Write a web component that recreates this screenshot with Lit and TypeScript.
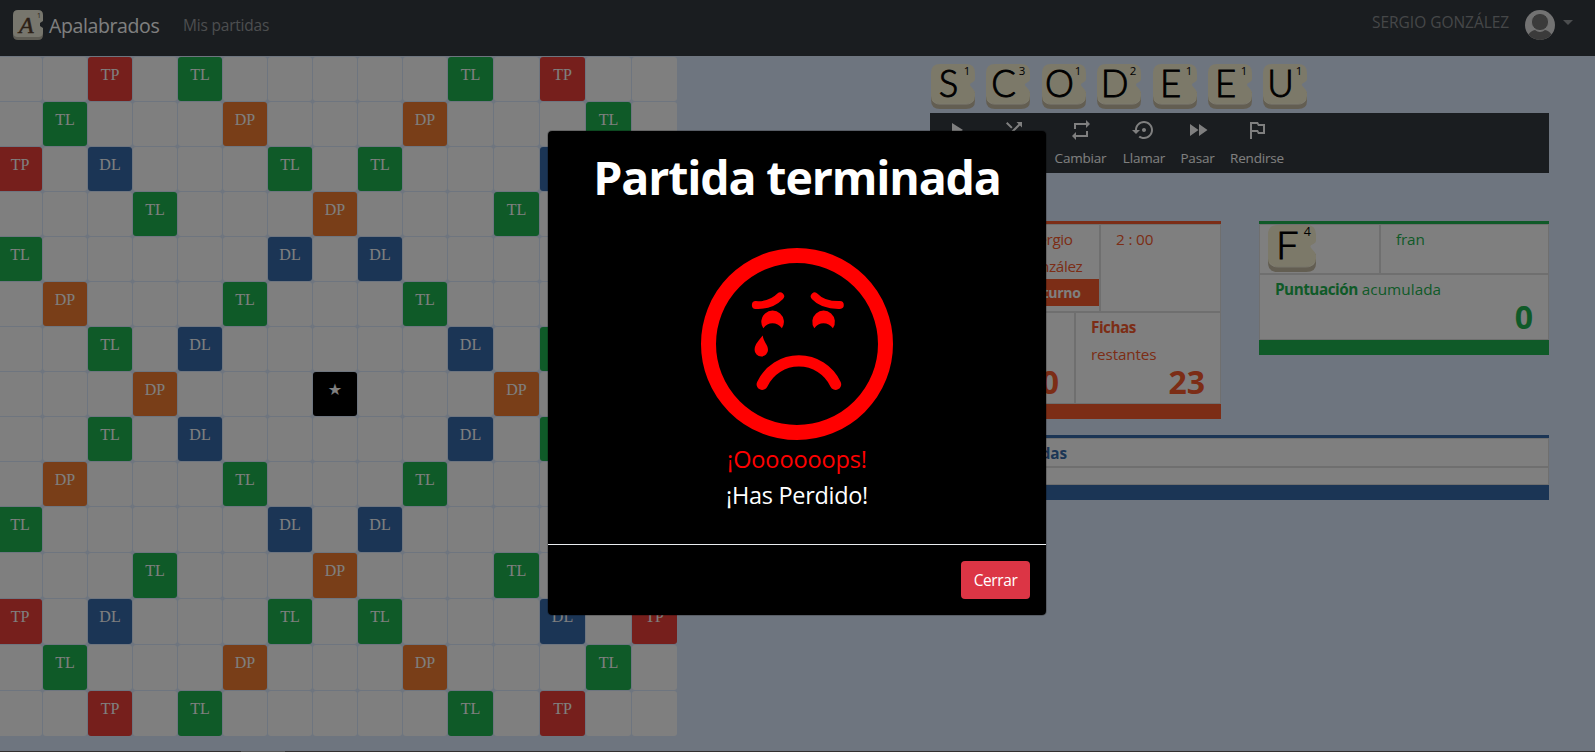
import { LitElement, html, svg, css } from "lit";
import { customElement, property } from "lit/decorators.js";

const HALF: Record<number, string>[] = [
  { 2: "TP", 4: "TL", 10: "TL", 12: "TP" },
  { 1: "TL", 5: "DP", 9: "DP", 13: "TL" },
  { 0: "TP", 2: "DL", 6: "TL", 8: "TL", 12: "DL", 14: "TP" },
  { 3: "TL", 7: "DP", 11: "TL" },
  { 0: "TL", 6: "DL", 8: "DL", 14: "TL" },
  { 1: "DP", 5: "TL", 9: "TL", 13: "DP" },
  { 2: "TL", 4: "DL", 10: "DL", 12: "TL" },
];
const ROWS = [...HALF, { 3: "DP", 7: "★", 11: "DP" } as Record<number, string>, ...[...HALF].reverse()];

@customElement("letter-tile")
class LetterTile extends LitElement {
  @property() letter = "";
  @property() points = "1";
  static styles = css`
    :host { display: block; }
    svg { display: block; width: 100%; height: 100%; }
    .l { font: 300 36.5px Lato, sans-serif; fill: #000; stroke: #000; stroke-width: .9px; text-anchor: middle; }
    .p { font: 400 11.5px "Open Sans", sans-serif; fill: #000; text-anchor: middle; }
  `;
  render() {
    return html`<svg viewBox="0 0 44 45" preserveAspectRatio="none">
      <path d="M0 30V36Q0 45 9 45H35Q44 45 44 37V28Z" fill="#c6bca4" />
      <path d="M9 0H35Q44 0 44 9V15Q44 17 42 18L39.500 19.500Q38.300 20.500 39.500 22L42.500 25.500Q44 27 44 29V32Q44 40 35 40H9Q0 40 0 32V9Q0 0 9 0Z" fill="#f8f2d2" />
      <path d="M1.500 36Q4 40.200 9 40.200H35Q40 40.200 42.500 36" fill="none" stroke="#fffbe6" stroke-width=".7" />
      <text class="l" x="17.500" y="33">${this.letter}</text>
      <text class="p" x="36" y="11">${this.points}</text>
    </svg>`;
  }
}

@customElement("game-board")
class GameBoard extends LitElement {
  static styles = css`
    :host { display: block; width: 677px; overflow: hidden; }
    .grid { display: grid; width: 680px; margin-left: -2px; padding-top: 1px;
      grid-template-columns: repeat(10, 45px) repeat(5, 46px);
      grid-template-rows: repeat(10, 45px) repeat(5, 46px); }
    .c { margin: 0 1px 1px 0; border-radius: 3px; background: #fff; color: #fff; text-align: center;
      font: 16px/24px "Liberation Serif", serif; padding-top: 6px; box-sizing: border-box; }
    .TP { background: #ec3e38; }
    .TL { background: #1eb450; }
    .DP { background: #f27c30; }
    .DL { background: #376bab; }
    .star { background: #000; font-family: "DejaVu Sans", sans-serif; font-size: 16px; }
  `;
  render() {
    return html`<div class="grid">
      ${ROWS.map((row) => Array.from({ length: 15 }, (_, i) => {
        const v = row[i] ?? "";
        return html`<div class="c ${v === "★" ? "star" : v}">${v}</div>`;
      }))}
    </div>`;
  }
}

const TOOLS: [string, string, string][] = [
  ["play", "Jugar", "M8 5v14l11-7z"],
  ["mix", "Mezclar", "M10.590 9.170L5.410 4 4 5.410l5.170 5.170 1.420-1.410zM14.500 4l2.040 2.040L4 18.590 5.410 20 17.960 7.460 20 9.500V4h-5.500zm.330 9.410l-1.410 1.410 3.130 3.130L14.500 20H20v-5.500l-2.040 2.040-3.130-3.130z"],
  ["swap", "Cambiar", "M7 7h10v3l4-4-4-4v3H5v6h2V7zm10 10H7v-3l-4 4 4 4v-3h12v-6h-2v4z"],
  ["call", "Llamar", "M14 12c0-1.100-.900-2-2-2s-2 .900-2 2 .900 2 2 2 2-.900 2-2zm-2-9c-4.970 0-9 4.030-9 9H0l4 4 4-4H5c0-3.870 3.130-7 7-7s7 3.130 7 7-3.130 7-7 7c-1.510 0-2.910-.490-4.060-1.300l-1.420 1.440C8.040 20.300 9.940 21 12 21c4.970 0 9-4.030 9-9s-4.030-9-9-9z"],
  ["pass", "Pasar", "M4 18l8.500-6L4 6v12zm9-12v12l8.500-6L13 6z"],
  ["quit", "Rendirse", "M14 6l-1-2H5v17h2v-7h5l1 2h7V6h-6zm4 8h-4l-1-2H7V6h5l1 2h5v6z"],
];

@customElement("app-root")
class AppRoot extends LitElement {
  static styles = css`
    :host { display: block; position: relative; width: 100%; height: 752px; overflow: hidden; background: #ddeaff;
      font: 15.500px/24px "Open Sans", sans-serif; }
    * { box-sizing: border-box; }
    .nav { height: 56px; background: #343a40; display: flex; align-items: flex-start; padding: 10px 22px 0 13px; }
    .logo { width: 30px; height: 30px; display: block; }
    .brand { font-size: 19.500px; line-height: 31px; color: #fff; margin-left: 6px; width: 134px; letter-spacing: -.38px; }
    .link { color: #999c9f; line-height: 31px; letter-spacing: -.2px; flex: 1; }
    .user { color: #8b8e91; line-height: 25px; letter-spacing: -.03px; width: 153px; white-space: nowrap; }
    .avatar { width: 30px; height: 30px; }
    .caret { border: 5px solid transparent; border-top-color: #999c9f; border-bottom: 0; margin: 10px 0 0 8px; }
    .main { display: flex; height: 695px; }
    .side { margin-left: 253px; width: 619px; }
    .rack { display: flex; gap: 11.400px; padding: 8px 0 0 1px; height: 57px; }
    .rack letter-tile { width: 44px; height: 45px; }
    .tools { height: 60px; background: #343a40; display: flex; color: #fff; }
    .tool { display: flex; flex-direction: column; align-items: center; padding-top: 5px; font-size: 13.500px; line-height: 20px; letter-spacing: -.2px; }
    .tool svg { width: 24px; height: 24px; fill: #fff; margin-bottom: 5.500px; }
    .play { width: 51px; } .mix { width: 65px; } .swap { width: 69px; } .call { width: 58px; } .pass { width: 49px; } .quit { width: 70px; }
    .cards { display: grid; grid-template-columns: 291px 290px; gap: 16px 38px; align-items: start; padding-top: 48px; }
    .card { border-top: 3px solid var(--c); border-bottom: 15px solid var(--c); color: var(--c); }
    .me { --c: #f85a2c; } .rival { --c: #1eb450; }
    .log { --c: #376bab; grid-column: 1 / 3; }
    .row { display: flex; }
    .cell { background: #fff; border: 1px solid #dfdfdf; padding: 1px 15px 0; line-height: 27px; font-size: 15.300px; letter-spacing: -.15px; }
    b { font-weight: 700; letter-spacing: -.5px; }
    .name { letter-spacing: -.4px; }
    .who { width: 97px; padding: 1px 0 0; text-align: center; }
    .turn { background: var(--c); color: #fff; font-weight: 700; font-size: 14px; line-height: 27px; height: 27px; margin-top: -1px; letter-spacing: -.3px; }
    .num { font-size: 32px; font-weight: 700; text-align: right; line-height: 27px; letter-spacing: 0; }
    .turnrow { height: 88px; } .scorerow { height: 92px; } .namerow { height: 50px; } .totalrow { height: 66px; } .loghead { height: 29px; } .logbody { height: 18px; }
    .loghead b { letter-spacing: -.1px; }
    .totalrow { letter-spacing: .05px; }
    .photo { width: 73px; } .total { width: 145px; } .left { width: 146px; } .initial { width: 121px; }
    .grow { flex: 1; }
    .cell.tilecell { padding: 0 8px; }
    .tilecell letter-tile { width: 48px; height: 47px; }
    .foot { height: 1px; background: #65615f; }
    .foot i { display: block; margin-left: 241px; width: 44px; height: 1px; background: #aaa; }
    .backdrop { position: absolute; inset: 0; background: rgba(0, 0, 0, .5); }
    .modal { position: absolute; left: 547px; top: 130px; width: 500px; height: 486px; background: #000; background-clip: padding-box;
      border: 1px solid rgba(0, 0, 0, .2); border-radius: 5px; color: #fff; display: flex; flex-direction: column; align-items: center; }
    .title { font-size: 46.500px; font-weight: 700; line-height: 60px; margin: 16px 0 0; letter-spacing: -1.150px; white-space: nowrap; }
    .face { display: block; width: 192px; height: 192px; margin-top: 41px; }
    .msg { font-size: 23.500px; line-height: 36px; letter-spacing: -.3px; }
    .oops { color: #f00; margin-top: 1px; letter-spacing: -.12px; }
    .bar { margin-top: auto; width: 100%; height: 71px; border-top: 1px solid #e9ecef; display: flex; justify-content: flex-end; padding: 16px 16px 0; }
    .btn { width: 69px; height: 38px; border: 0; border-radius: 4px; background: #dc3545; color: #fff; padding: 1px 0 0; font: 15.500px/37px "Open Sans", sans-serif; letter-spacing: -.4px; }
    .lg { font: italic 400 24px "Liberation Serif", serif; fill: #59402c; stroke: #59402c; stroke-width: .5px; }
    .lp { font: 7px "Open Sans", sans-serif; fill: #59402c; }
  `;

  private face() {
    return svg`<svg class="face" viewBox="0 0 192 192" fill="none" stroke="#f00" stroke-linecap="round">
      <circle cx="96" cy="96" r="88.500" stroke-width="15" />
      <path d="M54.800 57Q70 57.800 79.200 48.300M113.700 48.300Q122 57.400 138.900 57" stroke-width="7.800" />
      <path d="M61.200 136.300A40.500 40.500 0 0 1 134.600 136.300" stroke-width="11.200" />
      <g fill="#f00" stroke="none">
        <path d="M62.300 80.300A11.300 11.300 0 1 1 80.900 80.300Q77 75.300 71.500 75.300T62.300 80.300Z" />
        <path d="M113.300 80.300A11.300 11.300 0 1 1 131.900 80.300Q128 75.300 122.500 75.300T113.300 80.300Z" />
        <path d="M61.700 87.500C62.500 94 67 96.500 67 102A6.700 6.400 0 0 1 53.600 102C53.600 96 58 92.500 61.700 87.500Z" />
      </g>
    </svg>`;
  }

  render() {
    return html`
      <div class="nav">
        <svg class="logo" viewBox="0 0 30 30">
          <path d="M0 20V25Q0 30 5 30H25Q30 30 30 25V20Z" fill="#bdb9a9" />
          <path d="M5 0H25Q30 0 30 5V11L27 13V16L30 18V22Q30 27 25 27H5Q0 27 0 22V5Q0 0 5 0Z" fill="#efecdb" />
          <text class="lg" x="6" y="22.500">A</text><text class="lp" x="24" y="8">1</text>
        </svg>
        <div class="brand">Apalabrados</div>
        <div class="link">Mis partidas</div>
        <div class="user">SERGIO GONZÁLEZ</div>
        <svg class="avatar" viewBox="0 0 30 30">
          <circle cx="15" cy="15" r="15" fill="#e4e4e4" />
          <path d="M3.500 24.600Q6 20.500 10 20Q15 24 20 20Q24 20.500 26.500 24.600A15 15 0 0 1 3.500 24.600Z" fill="#777" />
          <circle cx="15" cy="12" r="8.600" fill="#777" stroke="#e4e4e4" stroke-width="1" />
        </svg>
        <div class="caret"></div>
      </div>
      <div class="main">
        <game-board></game-board>
        <div class="side">
          <div class="rack">
            ${[["S", 1], ["C", 3], ["O", 1], ["D", 2], ["E", 1], ["E", 1], ["U", 1]].map(
              ([l, p]) => html`<letter-tile letter=${l} points=${p}></letter-tile>`)}
          </div>
          <div class="tools">
            ${TOOLS.map(([cls, label, d]) => html`<div class="tool ${cls}"><svg viewBox="0 0 24 24"><path d=${d} /></svg><span>${label}</span></div>`)}
          </div>
          <div class="cards">
            <div class="card me">
              <div class="row">
                <div class="cell photo turnrow"></div>
                <div class="cell who turnrow"><span class="name">Sergio<br />González</span><div class="turn">Tu turno</div></div>
                <div class="cell turnrow grow">2 : 00</div>
              </div>
              <div class="row">
                <div class="cell total scorerow"><b>Puntuación</b><br />acumulada<div class="num">0</div></div>
                <div class="cell left scorerow"><b>Fichas</b><br />restantes<div class="num">23</div></div>
              </div>
            </div>
            <div class="card rival">
              <div class="row">
                <div class="cell tilecell initial namerow"><letter-tile letter="F" points="4"></letter-tile></div>
                <div class="cell grow namerow">fran</div>
              </div>
              <div class="cell totalrow"><b>Puntuación</b> acumulada<div class="num">0</div></div>
            </div>
            <div class="card log">
              <div class="cell loghead"><b>Últimas jugadas</b></div>
              <div class="cell logbody"></div>
            </div>
          </div>
        </div>
      </div>
      <div class="foot"><i></i></div>
      <div class="backdrop"></div>
      <div class="modal" role="dialog">
        <div class="title">Partida terminada</div>
        ${this.face()}
        <div class="msg oops">¡Ooooooops!</div>
        <div class="msg">¡Has Perdido!</div>
        <div class="bar"><button class="btn">Cerrar</button></div>
      </div>`;
  }
}
